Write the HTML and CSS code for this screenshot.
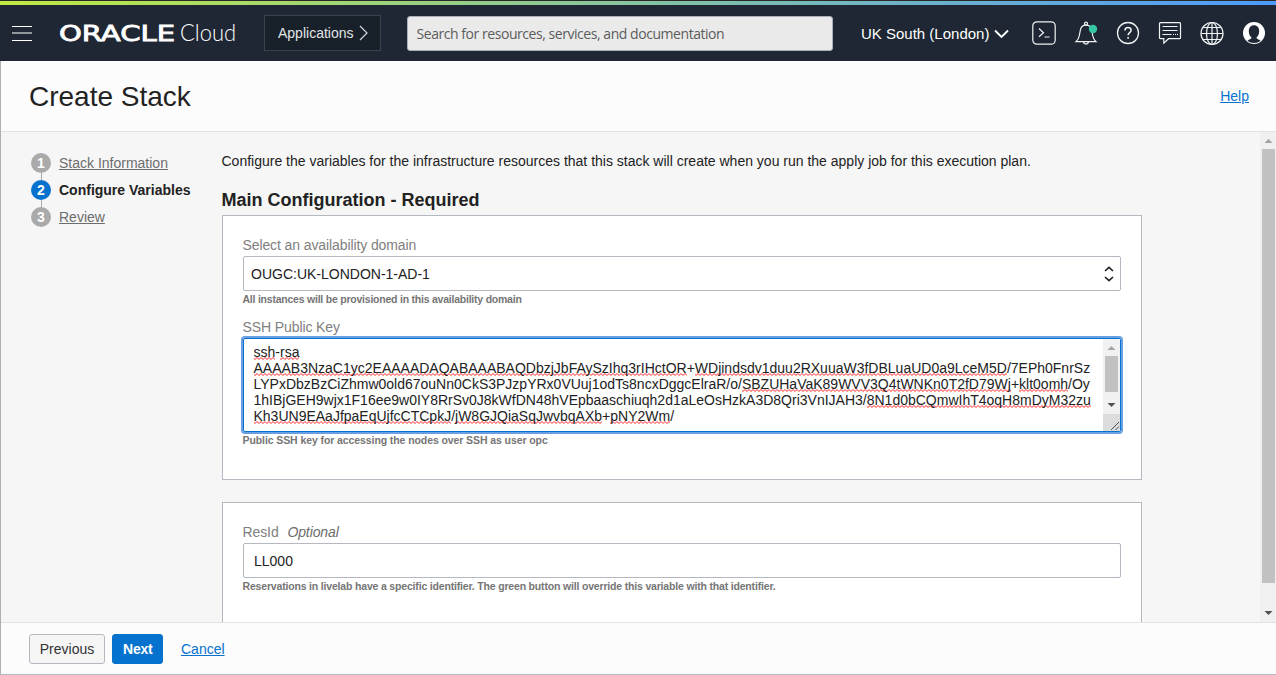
FILE: index.html
```
<!DOCTYPE html>
<html lang="en">
<head>
<meta charset="utf-8">
<title>Create Stack</title>
<link rel="stylesheet" href="styles.css">
</head>
<body>
<div class="app">
  <div class="brand-line"></div>
  <header class="topbar">
    <div class="menu"><span></span><span class="dim"></span><span></span></div>
    <svg class="logo" width="180" height="40" viewBox="0 0 180 40">
      <text class="logo-oracle" x="0" y="28" textLength="116" lengthAdjust="spacingAndGlyphs">ORACLE</text>
      <text class="logo-cloud" x="121" y="28" textLength="56" lengthAdjust="spacingAndGlyphs">Cloud</text>
    </svg>
    <div class="apps"><span>Applications</span><svg width="10" height="16" viewBox="0 0 10 16"><path d="M1 1l7 7-7 7" fill="none" stroke="#d5d8da" stroke-width="1.2"/></svg></div>
    <div class="search">Search for resources, services, and documentation</div>
    <div class="region"><span>UK South (London)</span><svg width="15" height="10" viewBox="0 0 15 10"><path d="M1 1.500l6.500 6.500 6.500-6.500" fill="none" stroke="#fff" stroke-width="1.900"/></svg></div>
    <div class="icons">
      <svg width="24" height="24" viewBox="0 0 24 24" fill="none" stroke="#f2f3f4" stroke-width="1.200"><rect x=".8" y=".8" width="22.400" height="22.400" rx="4"/><path d="M7 7.500l4.500 4.200L7 15.800M12.500 16h5"/></svg>
      <svg width="24" height="24" viewBox="0 0 24 24" fill="none" stroke="#f2f3f4" stroke-width="1.200"><circle cx="12" cy="2.700" r="1.500"/><path d="M2 20.700h20c-1.700-1.500-2.700-3.200-3.200-5.700l-1.100-6C17 6 15 4.200 12 4.200S7 6 6.400 9l-1.200 6C4.700 17.500 3.700 19.200 2 20.700zM9.500 21c.3 1.400 1.200 2.200 2.500 2.200s2.200-.8 2.500-2.200"/><circle cx="19" cy="8" r="4.200" fill="#35c7a4" stroke="none"/></svg>
      <svg width="24" height="24" viewBox="0 0 24 24" fill="none" stroke="#f2f3f4" stroke-width="1.300"><circle cx="12" cy="12" r="10.500"/><path d="M9 9.500c0-1.800 1.200-3 3-3s3.100 1.100 3.100 2.800c0 2.300-3 2.300-3 5M12.100 16v1.700" stroke-width="1.500"/></svg>
      <svg width="24" height="24" viewBox="0 0 24 24" fill="none" stroke="#f2f3f4" stroke-width="1.200"><path d="M2.500 1.700h19q1 0 1 1v14q0 1-1 1H10.500l-4.700 4.500v-4.500H2.500q-1 0-1-1v-14q0-1 1-1zM4.500 5.500h15M4.500 9.500h15M4.500 13.500h9M15 13.500h1M17 13.500h1M19 13.500h1"/></svg>
      <svg width="24" height="24" viewBox="0 0 24 24" fill="none" stroke="#f2f3f4" stroke-width="1.200"><circle cx="12" cy="12.500" r="11"/><ellipse cx="12" cy="12.500" rx="5.500" ry="11"/><path d="M12 1.500v22M1 12.500h22M3.500 6.500h17M3.500 18.500h17"/></svg>
      <svg width="24" height="24" viewBox="0 0 24 24"><circle cx="12" cy="12" r="11" fill="#fff"/><path d="M12 4.300c3.200 0 5.200 2.300 5.200 5.800 0 3.200-1.200 5.300-2.800 6.500.4 1.500 2.300 1.900 4.200 3.100-3.600 2.900-9.600 2.900-13.200 0 1.900-1.200 3.800-1.600 4.200-3.100-1.600-1.200-2.800-3.300-2.800-6.500 0-3.500 2-5.800 5.200-5.800z" fill="#1e2733"/></svg>
    </div>
  </header>
  <div class="frame">
    <div class="titlebar"><h1>Create Stack</h1><a class="link">Help</a></div>
    <div class="body">
      <nav class="steps">
        <div class="step"><b>1</b><span>Stack Information</span></div>
        <div class="step current"><b>2</b><span>Configure Variables</span></div>
        <div class="step"><b>3</b><span>Review</span></div>
      </nav>
      <main>
        <p class="intro">Configure the variables for the infrastructure resources that this stack will create when you run the apply job for this execution plan.</p>
        <h2>Main Configuration - Required</h2>
        <section class="panel first">
          <div class="label">Select an availability domain</div>
          <div class="field select"><span>OUGC:UK-LONDON-1-AD-1</span><svg width="10" height="16" viewBox="0 0 10 16" fill="none" stroke="#222" stroke-width="1.700"><path d="M1 5l4-3.700L9 5M1 11l4 3.700L9 11"/></svg></div>
          <div class="hint domain-hint">All instances will be provisioned in this availability domain</div>
          <div class="label key-label">SSH Public Key</div>
          <div class="textarea">
            <div class="key">
              <div><u>ssh</u>-<u>rsa</u></div>
              <div><u>AAAAB3NzaC1yc2EAAAADAQABAAABAQDbzjJbFAySzIhq3rIHctOR</u>+<u>WDjindsdv1duu2RXuuaW3fDBLuaUD0a9LceM5D</u>/7EPh0FnrSz</div>
              <div>LYPxDbzBzCiZhmw0old67ouNn0CkS3PJzpYRx0VUuj1odTs8ncxDggcElraR/o/<u>SBZUHaVaK89WVV3Q4tWNKn0T2fD79Wj</u>+<u>klt0omh</u>/Oy</div>
              <div>1hIBjGEH9wjx1F16ee9w0IY8RrSv0J8kWfDN48hVEpbaaschiuqh2d1aLeOsHzkA3D8Qri3VnIJAH3/<u>8N1d0bCQmwIhT4oqH8mDyM32zu</u></div>
              <div><u>Kh3UN9EAaJfpaEqUjfcCTCpkJ</u>/<u>jW8GJQiaSqJwvbqAXb</u>+<u>pNY2Wm</u>/</div>
            </div>
            <div class="inner-scroll">
              <svg width="17" height="75" viewBox="0 0 17 75"><path d="M4.500 11h8l-4-4z" fill="#a3a3a3"/><rect x="2" y="17" width="13" height="36" fill="#c1c1c1"/><path d="M4.500 64h8l-4 4z" fill="#505050"/></svg>
              <svg class="grip" width="17" height="17" viewBox="0 0 17 17"><path d="M8 16l8-8M12.500 16l3.500-3.500" stroke="#505050"/></svg>
            </div>
          </div>
          <div class="hint key-hint">Public SSH key for accessing the nodes over SSH as user opc</div>
        </section>
        <section class="panel second">
          <div class="label">ResId <i>Optional</i></div>
          <div class="field input">LL000</div>
          <div class="hint">Reservations in livelab have a specific identifier. The green button will override this variable with that identifier.</div>
        </section>
      </main>
      <div class="scrollbar">
        <svg width="16" height="17" viewBox="0 0 16 17"><path d="M4.500 11h8l-4-4z" fill="#a3a3a3"/></svg>
        <div class="thumb"></div>
        <svg width="16" height="17" viewBox="0 0 16 17"><path d="M4.500 6h8l-4 4z" fill="#505050"/></svg>
      </div>
    </div>
    <footer><a class="btn">Previous</a><a class="btn primary">Next</a><a class="link">Cancel</a></footer>
  </div>
</div>
</body>
</html>
```
FILE: styles.css
```
* { box-sizing: border-box; }
body { margin: 0; font: 14px/18px "Liberation Sans", Arial, sans-serif; color: #222; }
h1, h2, p { margin: 0; }
svg { display: block; flex: none; }
.app { width: 1276px; height: 675px; display: flex; flex-direction: column; overflow: hidden; }
.brand-line { height: 5px; flex: none; border-top: 1px solid #2b2926; background: linear-gradient(90deg, #bfea43, #73b7bf 66%, #4d9bfc); }
.topbar { height: 56px; flex: none; background: #1e2733; display: flex; align-items: center; color: #fff; white-space: nowrap; }
.menu { width: 20px; margin-left: 12px; display: grid; gap: 6px; }
.menu span { height: 1px; background: #fff; }
.menu .dim { background: #92979c; height: 2px; margin: -1px 0 0; }
.logo { margin-left: 27px; fill: #fff; }
.logo-oracle { font: 400 20.5px "DejaVu Sans", sans-serif; stroke: #fff; stroke-width: .8px; }
.logo-cloud { font: 300 23px Lato, sans-serif; }
.apps { width: 117px; height: 36px; margin-left: 25px; border: 1px solid #38424c; background: #18202a; color: #e2e5e7; display: flex; align-items: center; gap: 5px; padding-left: 13px; }
.search { width: 426px; height: 35px; margin-left: 26px; border: 1px solid #aab0b8; border-radius: 3px; background: #eaeaea; color: #5c5c5c; font: 14px/33px "Open Sans", sans-serif; padding-left: 8.5px; letter-spacing: -.45px; }
.region { margin-left: 28px; width: 148px; padding-top: 1px; display: flex; align-items: center; justify-content: space-between; font-size: 15px; letter-spacing: 0; }
.icons { display: flex; gap: 18px; margin-left: 23px; }
.frame { flex: 1; min-height: 0; border-left: 1px solid #adb0b3; border-bottom: 1px solid #b0b8c0; display: flex; flex-direction: column; }
.titlebar { height: 71px; flex: none; border-bottom: 1px solid #e3e3e3; background: #fcfcfc; display: flex; align-items: center; justify-content: space-between; padding: 0 27px 0 28px; }
h1 { font-size: 28px; font-weight: 400; line-height: 32px; padding-top: 2px; }
.link { color: #0572ce; text-decoration: underline; }
.body { flex: 1; min-height: 0; background: #f6f6f6; display: flex; overflow: hidden; }
.steps { width: 221px; flex: none; padding: 21px 0 0 30px; display: flex; flex-direction: column; gap: 7px; }
.step { display: flex; height: 20px; align-items: center; gap: 8px; color: #6d6d6d; position: relative; }
.step b { width: 20px; height: 20px; border-radius: 50%; background: #aaa; color: #fff; text-align: center; line-height: 20px; }
.step span { text-decoration: underline; text-underline-offset: 1px; }
.step + .step::before { content: ""; position: absolute; left: 10px; top: -7px; height: 7px; width: 1px; background: #aaa; }
.current { color: #222; font-weight: 700; }
.current b { background: #0572ce; }
.step.current span { text-decoration: none; }
main { width: 920px; flex: none; }
.intro { padding-top: 20px; white-space: nowrap; text-indent: -.5px; }
h2 { font-size: 18px; line-height: 24px; margin-top: 18px; text-indent: -.5px; }
.panel { width: 920px; border: 1px solid #b3b8c1; background: #fff; padding: 20px 20px 0; }
.first { height: 265px; margin-top: 3px; }
.second { height: 200px; margin-top: 22px; }
.label { color: #808080; height: 18px; letter-spacing: -.1px; text-indent: -.5px; }
.label i { margin-left: 5px; color: #6d6d6d; }
.field { height: 35px; margin-top: 2px; border: 1px solid #b3b8c1; border-radius: 2px; line-height: 34px; width: 878px; }
.select { display: flex; align-items: center; justify-content: space-between; padding: 0 6px 0 7px; }
.select span { padding-top: 1px; }
.input { padding: 0 0 0 10px; }
.hint { font-size: 10.5px; font-weight: 700; line-height: 14px; margin-top: 1px; color: #767676; white-space: nowrap; letter-spacing: -.176px; text-indent: -.5px; }
.domain-hint { letter-spacing: -.226px; }
.key-label { margin-top: 12px; }
.textarea { margin-top: 2px; width: 878px; height: 94px; border: 1px solid #0572ce; border-radius: 2px; box-shadow: 0 0 0 2px #69a0e3; display: flex; justify-content: space-between; }
.key { padding: 5px 0 0 9.5px; line-height: 16px; white-space: nowrap; }
.key u { text-decoration: none; background: url("data:image/svg+xml,%3Csvg xmlns='http://www.w3.org/2000/svg' width='4' height='3'%3E%3Cpath d='M-1 .5L1 2.5 3 .5 5 2.5' fill='none' stroke='%23f22' stroke-width='1'/%3E%3C/svg%3E") 0 100% repeat-x; }
.inner-scroll { width: 17px; background: #f1f1f1; }
.grip { background: #dcdcdc; }
.key-hint { letter-spacing: -.09px; }
.scrollbar { width: 16px; background: #f0f0f0; margin-left: auto; display: flex; flex-direction: column; justify-content: space-between; }
.thumb { width: 13px; height: 434px; margin: 0 0 auto 2px; background: #c1c1c1; }
footer { height: 52px; flex: none; border-top: 1px solid #e3e3e3; background: #fcfcfc; display: flex; align-items: center; padding-left: 28px; }
.btn { height: 30px; width: 76px; border: 1px solid #b3b8c1; border-radius: 3px; background: #f5f5f5; line-height: 28px; text-align: center; color: #333; }
.primary { width: 51px; margin: 0 18px 0 7px; background: #0572ce; border-color: #0572ce; color: #fff; font-weight: 700; letter-spacing: -.2px; text-indent: .5px; }
```
